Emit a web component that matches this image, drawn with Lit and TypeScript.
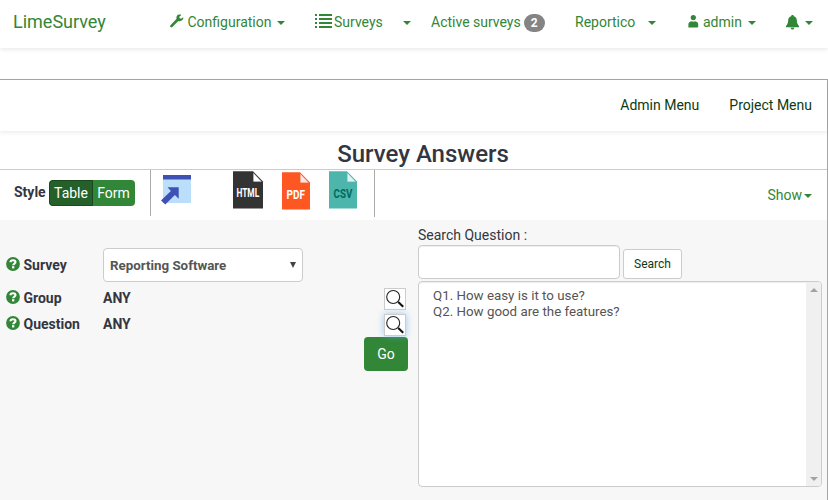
import { LitElement, html, css, svg } from "lit";
import { customElement, property } from "lit/decorators.js";

const wrench = html`<svg width="14" height="14" viewBox="0 0 14 14" fill="currentColor">
  <path d="M13.300 3.300 11 4.700 9.500 4.100 9.300 2.700 11.400 1C9.600.2 7.800.6 6.900 1.900 6.300 2.800 6.300 3.900 6.600 4.800L.5 11.300a1.200 1.200 0 0 0 1.800 1.700L8.300 7c1.600.5 3.300.1 4.300-1.200.6-.8.8-1.700.7-2.500Z" />
</svg>`;
const list = html`<svg width="17" height="15" viewBox="0 0 17 15" fill="currentColor" shape-rendering="crispEdges">
  ${[0, 4, 8, 12].map((y) => svg`<rect x="0" y=${y} width="2" height="2"/><rect x="4" y=${y} width="13" height="2"/>`)}
</svg>`;
const user = html`<svg width="11" height="13" viewBox="0 0 11 13" fill="currentColor">
  <circle cx="5.300" cy="2.600" r="2.600" />
  <path d="M.4 12.500V9.600C.4 7.600 1.600 6.600 3.500 6.200c1.100.6 2.500.6 3.600 0C9 6.600 10.200 7.600 10.200 9.600v2c0 .6-.4.900-.9.900Z" />
</svg>`;
const bell = html`<svg width="14" height="15" viewBox="0 0 14 15" fill="currentColor">
  <path d="M6.500 0c.8 0 1.300.5 1.300 1.300 2 .6 2.900 2 3 4 .1 2.600.7 4.200 2.200 5.700v1.200H0V11c1.500-1.500 2-3.100 2.200-5.700.1-2 1-3.400 3-4C5.200.5 5.700 0 6.500 0ZM4.700 12.700h3.600c0 1-.8 1.800-1.800 1.800s-1.800-.8-1.800-1.800Z" />
</svg>`;
const help = html`<svg width="14" height="14" viewBox="0 0 14 14">
  <circle cx="7" cy="7" r="6.900" fill="#328637" />
  <path d="M4.500 5.300C4.500 3.900 5.500 3.200 7 3.200s2.500.7 2.500 1.900C9.500 6.500 7.200 6.600 7.200 8.200" fill="none" stroke="#fff" stroke-width="2.100" />
  <rect x="6" y="9.200" width="2.300" height="2.200" fill="#fff" />
</svg>`;
const magnifier = html`<svg width="20" height="20" viewBox="0 0 20 20" fill="none">
  <circle cx="8.200" cy="8" r="6.500" stroke="#222" stroke-width="1.100" />
  <path d="m12.700 12.600 1.300 1.200" stroke="#222" stroke-width="1.200" />
  <path d="m13.500 13.300 4.700 4.500" stroke="#111" stroke-width="2.100" />
</svg>`;
const openWindow = html`<svg class="open" width="30" height="30" viewBox="0 0 30 30">
  <path d="M2 0h28v28H2Z" fill="#bbdefb" />
  <path d="M2 0h28v4.500H2Z" fill="#3f51b5" />
  <path d="M6.500 12.300h11.200v11.500l-3.800-3.900-9.600 9.700L0 25.600l9.900-9.600Z" fill="#3f51b5" />
</svg>`;

interface FileKind {
  width: number;
  x: number;
  baseline: number;
  squeeze: number;
}

const fileKinds: Record<string, FileKind> = {
  html: { width: 30, x: 3.4, baseline: 26.3, squeeze: 0.67 },
  pdf: { width: 28, x: 4.6, baseline: 26.9, squeeze: 0.8 },
  csv: { width: 28, x: 4.6, baseline: 27, squeeze: 0.78 },
};

@customElement("file-icon")
class FileIcon extends LitElement {
  @property() label = "";
  @property() kind = "html";
  static styles = css`
    :host { display: block; }
    svg { display: block; overflow: visible; }
    .html { --paper: #333; --fold: #fff; --ink: #fff; }
    .pdf { --paper: #ff5722; --fold: #fbe9e7; --ink: #fff; }
    .csv { --paper: #4db6ac; --fold: #e0f2f1; --ink: #00695c; }
    .paper { fill: var(--paper); }
    .fold { fill: var(--fold); stroke: var(--paper); stroke-width: 0.8; }
    text { fill: var(--ink); font: bold 12.5px Roboto, sans-serif; }
  `;
  render() {
    const { width: w, x, baseline, squeeze } = fileKinds[this.kind];
    return html`<svg class=${this.kind} width=${w} height="38" viewBox="0 0 ${w} 38">
      <path class="paper" d="M0 .3H${w - 10}L${w} 10.500V37.500H0Z" />
      <path class="fold" d="M${w - 10} 1.200V11H${w - 0.600}Z" />
      <text transform="translate(${x} ${baseline}) scale(${squeeze} 1)">${this.label}</text>
    </svg>`;
  }
}

@customElement("app-root")
class AppRoot extends LitElement {
  static styles = css`
    :host {
      display: flex; flex-direction: column; box-sizing: border-box; height: 500px; overflow: hidden;
      background: #fff; color: #333641; font: 14px/20px Roboto, sans-serif; white-space: nowrap;
    }
    * { box-sizing: border-box; }
    svg { display: block; flex: none; }
    .navbar { display: flex; align-items: center; height: 48px; padding: 0 0 4px 13px; color: #328637; box-shadow: 0 2px 4px rgba(0, 0, 0, 0.08); flex: none; }
    .brand { font-size: 18px; width: 157px; }
    .item { display: flex; align-items: center; flex: none; }
    .caret { width: 0; height: 0; border: 4px solid transparent; border-top-color: #328637; border-bottom: 0; flex: none; margin-top: 2px; }
    .config { width: 145px; }
    .config svg { margin: -2px 3.5px 0 0; }
    .config .caret { margin-left: 6px; }
    .surveys { width: 116px; }
    .surveys svg { margin: -2px 2px 0 0; }
    .surveys .caret { margin-left: 20.5px; }
    .active { width: 144px; }
    .badge { width: 21px; height: 18px; margin: 2px 0 0 3px; border-radius: 9px; background: #848484; color: #fff; font-size: 12px; line-height: 18px; font-weight: 700; text-align: center; }
    .reportico { width: 113px; }
    .reportico .caret { margin-left: 13px; }
    .admin { width: 98px; }
    .admin svg { margin: -2px 4px 0 0; }
    .admin .caret { margin-left: 6.5px; }
    .bell .caret { margin-left: 5px; }
    .panel { flex: 1; margin-top: 31px; border: solid #a5a5a5; border-width: 1px 1px 0 0; display: flex; flex-direction: column; }
    .menu { display: flex; justify-content: flex-end; gap: 30px; height: 51px; flex: none; padding: 15px 15px 0 0; color: #0e3a12; box-shadow: 0 2px 4px rgba(0, 0, 0, 0.07); }
    h1 { margin: 0; height: 39px; flex: none; padding: 8px 0 0 19px; font-size: 24px; line-height: 30px; font-weight: 500; text-align: center; border-bottom: 1px solid #ccc; }
    .toolbar { display: flex; height: 50px; flex: none; padding-left: 14px; }
    .style { display: flex; width: 137px; height: 46px; border-right: 1px solid #aaa; }
    .style b { width: 35px; padding-top: 12px; font-weight: 700; }
    .group { display: flex; width: 86px; height: 26px; margin-top: 10px; border-radius: 4px; overflow: hidden; background: #328637; color: #fff; line-height: 26px; text-align: center; }
    .on { width: 44px; background: #255f29; border: 1px solid #194a1d; border-radius: 4px 0 0 4px; line-height: 24px; }
    .off { width: 41px; }
    .exports { display: flex; width: 224px; height: 47px; border-right: 1px solid #aaa; }
    .open { margin: 5px 42px 0 10px; }
    .fhtml { margin: 1px 19px 0 0; }
    .fpdf { margin: 2px 18.5px 0 0; }
    .fcsv { margin-top: 1px; }
    .show { display: flex; align-items: center; margin-left: auto; padding-right: 15px; color: #328637; }
    .show .caret { margin-left: 2px; }
    .criteria { display: flex; flex: 1; background: #f7f7f7; }
    .filters { width: 418px; padding: 28px 10px 0 6px; }
    .row { display: flex; align-items: center; height: 26px; font-weight: 700; }
    .row.tall { height: 34px; margin-bottom: 3px; }
    .name { width: 79.5px; margin-left: 3.5px; }
    .row > svg { margin-top: -2px; }
    .select { display: flex; align-items: center; justify-content: space-between; width: 200px; height: 34px; padding: 0 6px; border: 1px solid #ccc; border-radius: 4px; background: #fff; color: #555; font-size: 13.333px; padding-top: 1px; }
    .arrow { width: 0; border: 3.5px solid transparent; border-top: 6px solid #444; border-bottom: 0; margin-top: -1px; }
    .lookup { width: 22px; height: 22px; margin: 2px 2px 0 auto; border: 1px solid #ccc; background: #fff; }
    .lookup.focus { box-shadow: 0 0 7px rgba(102, 175, 233, 0.65); }
    .go { width: 44px; height: 34px; margin-left: auto; border-radius: 4px; background: #328637; color: #fff; line-height: 34px; text-align: center; }
    .search { width: 404px; padding-top: 5px; }
    .line { display: flex; align-items: flex-end; gap: 3px; }
    .input { width: 202px; height: 34px; border: 1px solid #ccc; border-radius: 4px; background: #fff; box-shadow: inset 0 1px 1px rgba(0, 0, 0, 0.07); }
    .btn { width: 59px; height: 30px; border: 1px solid #ccc; border-radius: 3px; background: #fff; color: #0e3a12; font-size: 12px; line-height: 28px; text-align: center; }
    .box { display: flex; height: 206px; margin-top: 2px; border: 1px solid #ccc; border-radius: 4px; background: #fff; overflow: hidden; color: #555; font-size: 13.333px; line-height: 16px; box-shadow: inset 0 1px 1px rgba(0, 0, 0, 0.07); }
    .options { flex: 1; padding: 6px 14px; }
    .bar { display: flex; flex-direction: column; align-items: center; justify-content: space-between; width: 15px; background: #f0f0f0; padding: 6px 0 5px; }
    .up, .down { width: 0; border: 4px solid transparent; }
    .up { border-top: 0; border-bottom-color: #a3a3a3; }
    .down { border-bottom: 0; border-top-color: #a3a3a3; }
  `;
  render() {
    const caret = html`<i class="caret"></i>`;
    return html`
      <nav class="navbar">
        <span class="brand">LimeSurvey</span>
        <span class="item config">${wrench}<span>Configuration</span>${caret}</span>
        <span class="item surveys">${list}<span>Surveys</span>${caret}</span>
        <span class="item active"><span>Active surveys</span><span class="badge">2</span></span>
        <span class="item reportico"><span>Reportico</span>${caret}</span>
        <span class="item admin">${user}<span>admin</span>${caret}</span>
        <span class="item bell">${bell}${caret}</span>
      </nav>
      <main class="panel">
        <div class="menu"><span>Admin Menu</span><span>Project Menu</span></div>
        <h1>Survey Answers</h1>
        <div class="toolbar">
          <div class="style"><b>Style</b><div class="group"><span class="on">Table</span><span class="off">Form</span></div></div>
          <div class="exports">
            ${openWindow}
            <file-icon class="fhtml" kind="html" label="HTML"></file-icon>
            <file-icon class="fpdf" kind="pdf" label="PDF"></file-icon>
            <file-icon class="fcsv" kind="csv" label="CSV"></file-icon>
          </div>
          <div class="show"><span>Show</span>${caret}</div>
        </div>
        <div class="criteria">
          <div class="filters">
            <div class="row tall">${help}<span class="name">Survey</span><div class="select"><span>Reporting Software</span><i class="arrow"></i></div></div>
            <div class="row">${help}<span class="name">Group</span><span>ANY</span><span class="lookup">${magnifier}</span></div>
            <div class="row">${help}<span class="name">Question</span><span>ANY</span><span class="lookup focus">${magnifier}</span></div>
            <div class="go">Go</div>
          </div>
          <div class="search">
            <div>Search Question :</div>
            <div class="line"><div class="input"></div><div class="btn">Search</div></div>
            <div class="box">
              <div class="options"><div>Q1. How easy is it to use?</div><div>Q2. How good are the features?</div></div>
              <div class="bar"><i class="up"></i><i class="down"></i></div>
            </div>
          </div>
        </div>
      </main>
    `;
  }
}
